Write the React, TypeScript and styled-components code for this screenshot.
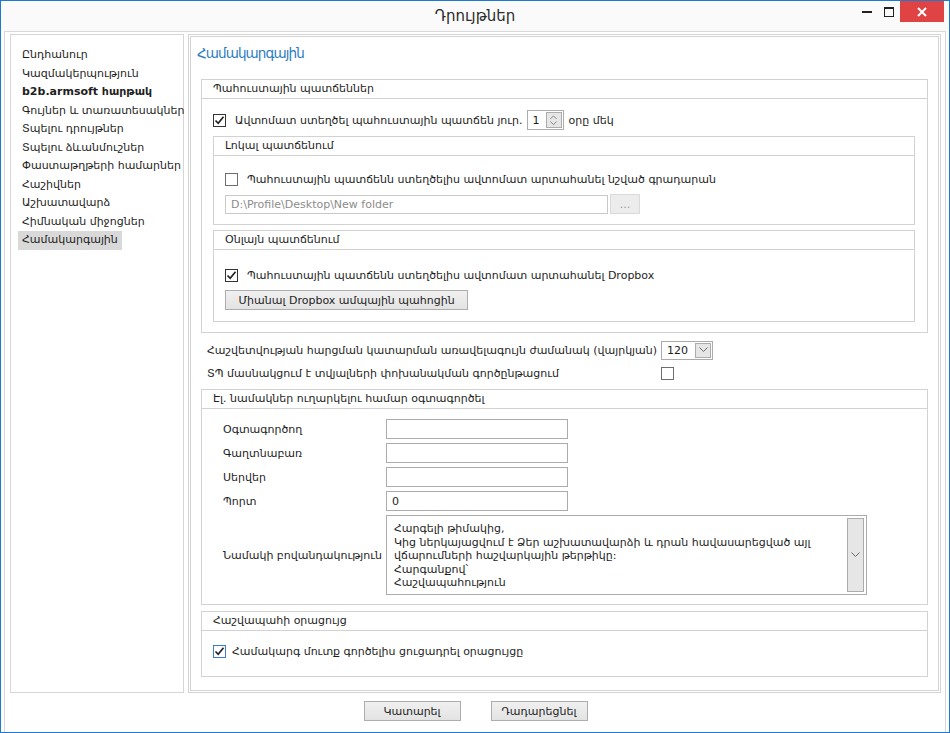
import React from "react";
import styled, { createGlobalStyle } from "styled-components";

const GlobalStyle = createGlobalStyle`
  html, body {
    margin: 0;
    padding: 0;
    background: #fff;
  }
  body {
    font-family: "DejaVu Sans", "Noto Sans", sans-serif;
    font-size: 11px;
    color: #1e1e1e;
  }
  * {
    box-sizing: border-box;
  }
`;

const Window = styled.div`
  width: 950px;
  height: 733px;
  border: 1px solid #1c7bd0;
  background: #fff;
  display: flex;
  flex-direction: column;
`;

const TitleBar = styled.div`
  height: 30px;
  display: grid;
  grid-template-columns: 1fr auto 1fr;
  align-items: start;
  background: #fafafa;
`;

const Title = styled.div`
  grid-column: 2;
  padding-top: 6px;
  font-size: 15px;
  color: #2b2b2b;
`;

const Controls = styled.div`
  grid-column: 3;
  justify-self: end;
  display: flex;
  margin-right: 5px;
`;

const ControlButton = styled.div<{ $close?: boolean }>`
  width: ${p => (p.$close ? "44px" : "22px")};
  height: 21px;
  display: flex;
  align-items: center;
  justify-content: center;
  background: ${p => (p.$close ? "#e04343" : "transparent")};
`;

const Client = styled.div`
  flex: 1;
  margin: 0 3px;
  border: 1px solid #d8d8d8;
  border-bottom: none;
  padding: 2px 4px 0 5px;
  display: flex;
  flex-direction: column;
`;

const MainRow = styled.div`
  flex: 1;
  display: flex;
  gap: 4px;
`;

const NavPanel = styled.div`
  width: 174px;
  border: 1px solid #d6d6d6;
  padding: 11px 0 0 7px;
`;

const NavItem = styled.div<{ $active?: boolean; $bold?: boolean }>`
  display: table;
  height: 18.5px;
  line-height: 18px;
  padding: 0 4px;
  font-weight: ${p => (p.$bold ? "bold" : "normal")};
  background: ${p => (p.$active ? "#d9d9d9" : "transparent")};
  white-space: nowrap;
`;

const ContentPanel = styled.div`
  flex: 1;
  border: 3px double #d4d4d4;
  padding: 4px 10px 0 10px;
  display: flex;
  flex-direction: column;
`;

const Heading = styled.div`
  margin-left: -4px;
  font-size: 13.5px;
  letter-spacing: -0.9px;
  line-height: 24px;
  color: #2a7bc3;
  margin-bottom: 14px;
`;

const Group = styled.div<{ $mt?: number }>`
  border: 1px solid #d2d2d2;
  margin-top: ${p => p.$mt ?? 0}px;
`;

const GroupHeader = styled.div`
  height: 19px;
  line-height: 18px;
  padding-left: 11px;
  border-bottom: 1px solid #d2d2d2;
  white-space: nowrap;
`;

const GroupBody = styled.div<{ $pad: string; $gap?: number }>`
  padding: ${p => p.$pad};
  display: flex;
  flex-direction: column;
  gap: ${p => p.$gap ?? 0}px;
`;

const Row = styled.div<{ $gap?: number }>`
  display: flex;
  align-items: center;
  height: 16px;
  gap: ${p => p.$gap ?? 9}px;
  white-space: nowrap;
`;

const Box = styled.span<{ $focus?: boolean; $dark?: boolean }>`
  width: 13px;
  height: 13px;
  flex: none;
  border: 1px solid ${p => (p.$focus ? "#3c7fc0" : p.$dark ? "#333" : "#6e6e6e")};
  background: #fff;
  display: flex;
  align-items: center;
  justify-content: center;
`;

const Check: React.FC<{ checked?: boolean; focus?: boolean }> = ({ checked, focus }) => (
  <Box $focus={focus} $dark={checked}>
    {checked && (
      <svg width="11" height="11" viewBox="0 0 11 11">
        <path d="M1.5 5.5 L4.2 8.3 L9.5 1.8" fill="none" stroke="#222" strokeWidth="1.7" />
      </svg>
    )}
  </Box>
);

const TextBox = styled.div<{ $w: number; $muted?: boolean; $h?: number }>`
  width: ${p => p.$w}px;
  height: ${p => p.$h ?? 20}px;
  border: 1px solid ${p => (p.$muted ? "#c9c9c9" : "#ababab")};
  background: #fff;
  color: ${p => (p.$muted ? "#8c8c8c" : "#1e1e1e")};
  display: flex;
  align-items: center;
  padding-left: 5px;
  white-space: nowrap;
  flex: none;
`;

const Spin = styled(TextBox)`
  padding: 1px;
  padding-left: 5px;
  justify-content: space-between;
`;

const SideButton = styled.span<{ $w?: number }>`
  width: ${p => p.$w ?? 16}px;
  height: 100%;
  background: #e6e6e6;
  border: 1px solid #acacac;
  display: flex;
  align-items: center;
  justify-content: center;
`;

const Button = styled.div<{ $w: number; $disabled?: boolean }>`
  width: ${p => p.$w}px;
  height: 20px;
  border: 1px solid ${p => (p.$disabled ? "#dadada" : "#adadad")};
  background: ${p => (p.$disabled ? "#ececec" : "linear-gradient(#f0f0f0, #e3e3e3)")};
  color: ${p => (p.$disabled ? "#9a9a9a" : "#1e1e1e")};
  display: flex;
  align-items: center;
  justify-content: center;
  white-space: nowrap;
  flex: none;
`;

const InlineRow = styled.div`
  display: flex;
  align-items: center;
  gap: 2px;
  height: 20px;
  white-space: nowrap;
`;

const CheckLabel = styled.span`
  margin: 0 2px 0 7px;
`;

const SettingsGrid = styled.div`
  display: grid;
  grid-template-columns: 454px auto;
  grid-auto-rows: 20px;
  row-gap: 3px;
  align-items: center;
  justify-items: start;
  margin: 7px 0 6px 6px;
  white-space: nowrap;
`;

const FormGrid = styled.div`
  display: grid;
  grid-template-columns: 163px auto;
  row-gap: 4px;
  align-items: center;
  justify-items: start;
  padding: 10px 0 9px 21px;
  white-space: nowrap;
`;

const Memo = styled.div`
  width: 481px;
  height: 80px;
  border: 1px solid #ababab;
  display: flex;
  padding: 2px;
`;

const MemoText = styled.div`
  flex: 1;
  padding: 4px 0 0 5px;
  line-height: 13.5px;
  white-space: pre;
`;

const Footer = styled.div`
  height: 39px;
  display: flex;
  justify-content: center;
  align-items: flex-start;
  padding-top: 8px;
  gap: 30px;
`;

const Chevron: React.FC<{ dir: "up" | "down"; size?: number }> = ({ dir, size = 9 }) => (
  <svg width={size} height={size / 2 + 1} viewBox="0 0 9 5.5">
    <path
      d={dir === "down" ? "M0.5 0.5 L4.5 4.5 L8.5 0.5" : "M0.5 5 L4.5 1 L8.5 5"}
      fill="none"
      stroke="#6a6a6a"
      strokeWidth="1"
    />
  </svg>
);

const SpinArrows = styled.span`
  display: flex;
  flex-direction: column;
  align-items: center;
  gap: 2px;
`;

const navItems = [
  "Ընդհանուր",
  "Կազմակերպություն",
  "b2b.armsoft հարթակ",
  "Գույներ և տառատեսակներ",
  "Տպելու դրույթներ",
  "Տպելու ձևանմուշներ",
  "Փաստաթղթերի համարներ",
  "Հաշիվներ",
  "Աշխատավարձ",
  "Հիմնական միջոցներ",
  "Համակարգային",
];

const memo =
  "Հարգելի թիմակից,\nԿից ներկայացվում է Ձեր աշխատավարձի և դրան հավասարեցված այլ\nվճարումների հաշվարկային թերթիկը:\nՀարգանքով՝\nՀաշվապահություն";

const App: React.FC = () => {
  return (
    <Window>
      <GlobalStyle />
      <TitleBar>
        <Title>Դրույթներ</Title>
        <Controls>
          <ControlButton>
            <svg width="10" height="10" viewBox="0 0 10 10">
              <rect x="0" y="4" width="10" height="2" fill="#222" />
            </svg>
          </ControlButton>
          <ControlButton>
            <svg width="10" height="10" viewBox="0 0 10 10">
              <rect x="0.5" y="0.5" width="9" height="9" fill="none" stroke="#222" />
              <rect x="0" y="0" width="10" height="2" fill="#222" />
            </svg>
          </ControlButton>
          <ControlButton $close>
            <svg width="10" height="10" viewBox="0 0 10 10">
              <path d="M1 1 L9 9 M9 1 L1 9" stroke="#fff" strokeWidth="2" />
            </svg>
          </ControlButton>
        </Controls>
      </TitleBar>
      <Client>
        <MainRow>
          <NavPanel>
            {navItems.map((item, i) => (
              <NavItem key={i} $bold={i === 2} $active={i === navItems.length - 1}>
                {item}
              </NavItem>
            ))}
          </NavPanel>
          <ContentPanel>
            <Heading>Համակարգային</Heading>

            <Group>
              <GroupHeader>Պահուստային պատճեններ</GroupHeader>
              <GroupBody $pad="11px 12px 10px 11px">
                <InlineRow>
                  <Check checked />
                  <CheckLabel>Ավտոմատ ստեղծել պահուստային պատճեն յուր.</CheckLabel>
                  <Spin $w={37}>
                    1
                    <SideButton>
                      <SpinArrows>
                        <Chevron dir="up" size={7} />
                        <Chevron dir="down" size={7} />
                      </SpinArrows>
                    </SideButton>
                  </Spin>
                  <CheckLabel as="span" style={{ marginLeft: 3 }}>օրը մեկ</CheckLabel>
                </InlineRow>

                <Group $mt={6}>
                  <GroupHeader>Լոկալ պատճենում</GroupHeader>
                  <GroupBody $pad="15px 11px 10px 11px" $gap={7}>
                    <Row>
                      <Check />
                      Պահուստային պատճենն ստեղծելիս ավտոմատ արտահանել նշված գրադարան
                    </Row>
                    <InlineRow>
                      <TextBox $w={383} $muted $h={19}>D:\Profile\Desktop\New folder</TextBox>
                      <Button $w={30} $disabled>...</Button>
                    </InlineRow>
                  </GroupBody>
                </Group>

                <Group $mt={5}>
                  <GroupHeader>Օնլայն պատճենում</GroupHeader>
                  <GroupBody $pad="17px 11px 11px 11px" $gap={7}>
                    <Row>
                      <Check checked />
                      Պահուստային պատճենն ստեղծելիս ավտոմատ արտահանել Dropbox
                    </Row>
                    <Button $w={243}>Միանալ Dropbox ամպային պահոցին</Button>
                  </GroupBody>
                </Group>
              </GroupBody>
            </Group>

            <SettingsGrid>
              <span>Հաշվետվության հարցման կատարման առավելագույն ժամանակ (վայրկյան)</span>
              <Spin $w={52} $h={19}>
                120
                <SideButton>
                  <Chevron dir="down" size={9} />
                </SideButton>
              </Spin>
              <span>ՏՊ մասնակցում է տվյալների փոխանակման գործընթացում</span>
              <Check />
            </SettingsGrid>

            <Group>
              <GroupHeader>Էլ. նամակներ ուղարկելու համար օգտագործել</GroupHeader>
              <FormGrid>
                <span>Օգտագործող</span>
                <TextBox $w={182} />
                <span>Գաղտնաբառ</span>
                <TextBox $w={182} />
                <span>Սերվեր</span>
                <TextBox $w={182} />
                <span>Պորտ</span>
                <TextBox $w={182}>0</TextBox>
                <span>Նամակի բովանդակություն</span>
                <Memo>
                  <MemoText>{memo}</MemoText>
                  <SideButton $w={17}>
                    <Chevron dir="down" size={9} />
                  </SideButton>
                </Memo>
              </FormGrid>
            </Group>

            <Group $mt={6}>
              <GroupHeader>Հաշվապահի օրացույց</GroupHeader>
              <GroupBody $pad="12px 11px 17px 11px">
                <Row $gap={6}>
                  <Check checked focus />
                  Համակարգ մուտք գործելիս ցուցադրել օրացույցը
                </Row>
              </GroupBody>
            </Group>
          </ContentPanel>
        </MainRow>
        <Footer>
          <Button $w={97}>Կատարել</Button>
          <Button $w={97}>Դադարեցնել</Button>
        </Footer>
      </Client>
    </Window>
  );
};

export default App;
